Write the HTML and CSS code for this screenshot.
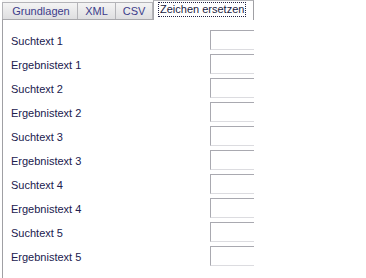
FILE: index.html
```html
<!DOCTYPE html>
<html>
<head>
<meta charset="utf-8">
<link rel="stylesheet" href="styles.css">
</head>
<body>
<div class="tabctl">
  <div class="tabs">
    <div class="tab first">Grundlagen</div>
    <div class="tab xml">XML</div>
    <div class="tab csv">CSV</div>
    <div class="tab active"><span class="focus">Zeichen ersetzen</span></div>
  </div>
  <div class="panel">
    <div class="row"><span class="lbl">Suchtext 1</span><span class="inp"></span></div>
    <div class="row"><span class="lbl">Ergebnistext 1</span><span class="inp"></span></div>
    <div class="row"><span class="lbl">Suchtext 2</span><span class="inp"></span></div>
    <div class="row"><span class="lbl">Ergebnistext 2</span><span class="inp"></span></div>
    <div class="row"><span class="lbl">Suchtext 3</span><span class="inp"></span></div>
    <div class="row"><span class="lbl">Ergebnistext 3</span><span class="inp"></span></div>
    <div class="row"><span class="lbl">Suchtext 4</span><span class="inp"></span></div>
    <div class="row"><span class="lbl">Ergebnistext 4</span><span class="inp"></span></div>
    <div class="row"><span class="lbl">Suchtext 5</span><span class="inp"></span></div>
    <div class="row"><span class="lbl">Ergebnistext 5</span><span class="inp"></span></div>
  </div>
</div>
</body>
</html>
```
FILE: styles.css
```css
html, body {
  margin: 0;
  padding: 0;
  background: #ffffff;
  overflow: hidden;
}
body {
  width: 366px;
  height: 278px;
  font-family: "Liberation Sans", Arial, sans-serif;
  font-size: 11px;
}
.tabctl {
  width: 252px;
  overflow: hidden;
  padding-left: 2px;
}
.tabs {
  display: flex;
  align-items: flex-end;
  height: 19px;
  background: #f7f7f7;
}
.tab {
  box-sizing: border-box;
  flex: none;
  white-space: nowrap;
  height: 17px;
  border: 1px solid #b4b4b8;
  border-bottom: none;
  border-left: none;
  background: linear-gradient(#f4f4f4, #dedee0);
  color: #3c3c8a;
  line-height: 16px;
  text-align: center;
}
.tab.first {
  border-left: 1px solid #b4b4b8;
  width: 76px;
  padding-left: 2px;
}
.tab.xml {
  width: 38px;
}
.tab.csv {
  width: 37px;
}
.tab.active {
  position: relative;
  z-index: 1;
  height: 20px;
  margin-bottom: -1px;
  width: 101px;
  background: #ffffff;
  color: #1a1a40;
  text-align: left;
  padding-left: 5px;
  border-left: 1px solid #a8a8ac;
  border-right: 1px solid #a0a0a4;
  margin-right: -1px;
}
.focus {
  display: inline-block;
  outline: 1px dotted #202040;
  line-height: 13px;
  padding: 0 1px;
  margin-top: 2px;
}
.panel {
  border-top: 1px solid #a8a8ac;
  border-left: 1px solid #a0a0a4;
  background: #ffffff;
  padding: 10px 0 20px 8px;
  display: flex;
  flex-direction: column;
  gap: 4px;
}
.row {
  display: flex;
  align-items: center;
  height: 20px;
}
.lbl {
  width: 199px;
  flex: none;
  color: #20204e;
  padding-top: 2px;
}
.inp {
  box-sizing: border-box;
  flex: none;
  width: 100px;
  height: 20px;
  border: 1px solid #a9a9b0;
  border-right-color: #e2e2e6;
  border-bottom-color: #dcdce0;
  background: #ffffff;
}
```
